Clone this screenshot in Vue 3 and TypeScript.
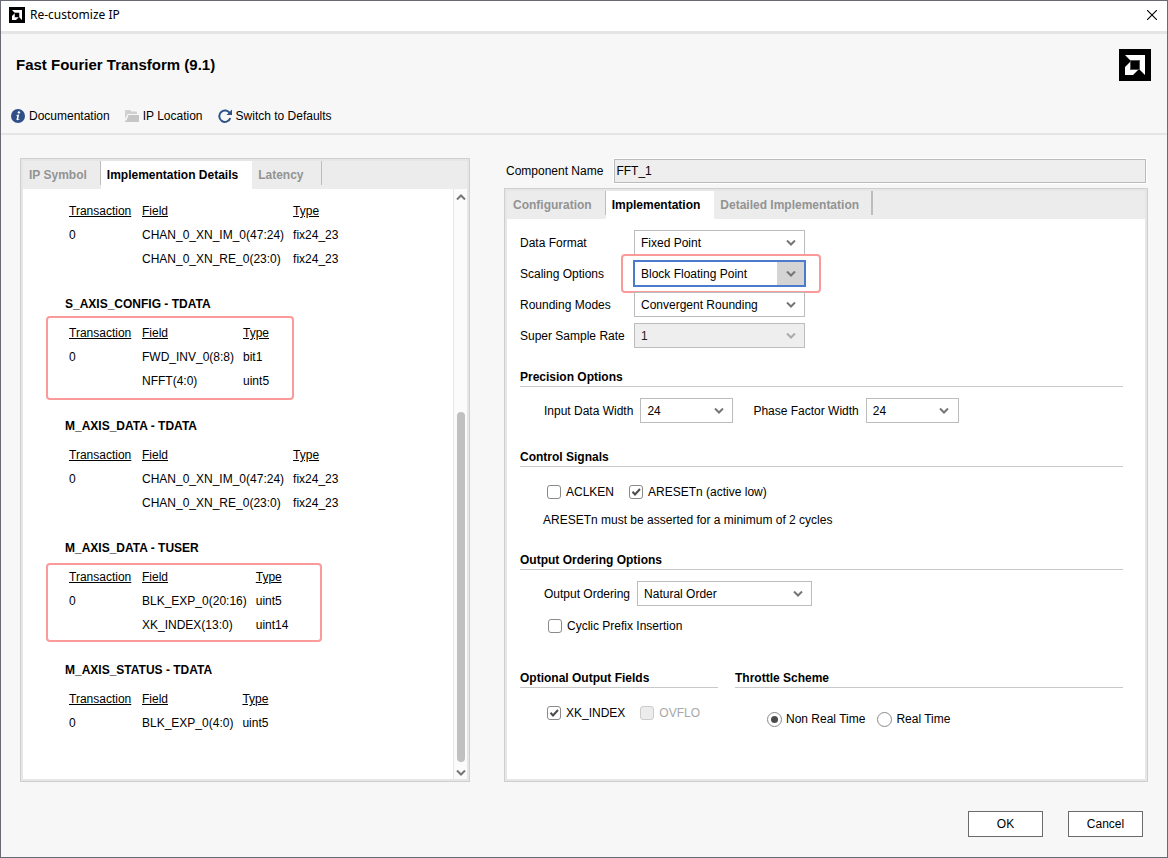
<script setup lang="ts">
import { ref } from 'vue'

interface PortRow {
  transaction: string
  field: string
  type: string
}
interface Port {
  title: string
  mark: string
  rows: PortRow[]
}
interface Option {
  id: string
  label: string
  value: string
  disabled: boolean
  focused: boolean
}

const ports: Port[] = [
  {
    title: '',
    mark: '',
    rows: [
      { transaction: '0', field: 'CHAN_0_XN_IM_0(47:24)', type: 'fix24_23' },
      { transaction: '', field: 'CHAN_0_XN_RE_0(23:0)', type: 'fix24_23' },
    ],
  },
  {
    title: 'S_AXIS_CONFIG - TDATA',
    mark: 'mark-config',
    rows: [
      { transaction: '0', field: 'FWD_INV_0(8:8)', type: 'bit1' },
      { transaction: '', field: 'NFFT(4:0)', type: 'uint5' },
    ],
  },
  {
    title: 'M_AXIS_DATA - TDATA',
    mark: '',
    rows: [
      { transaction: '0', field: 'CHAN_0_XN_IM_0(47:24)', type: 'fix24_23' },
      { transaction: '', field: 'CHAN_0_XN_RE_0(23:0)', type: 'fix24_23' },
    ],
  },
  {
    title: 'M_AXIS_DATA - TUSER',
    mark: 'mark-user',
    rows: [
      { transaction: '0', field: 'BLK_EXP_0(20:16)', type: 'uint5' },
      { transaction: '', field: 'XK_INDEX(13:0)', type: 'uint14' },
    ],
  },
  {
    title: 'M_AXIS_STATUS - TDATA',
    mark: '',
    rows: [{ transaction: '0', field: 'BLK_EXP_0(4:0)', type: 'uint5' }],
  },
]

const options: Option[] = [
  { id: 'data-format', label: 'Data Format', value: 'Fixed Point', disabled: false, focused: false },
  { id: 'scaling', label: 'Scaling Options', value: 'Block Floating Point', disabled: false, focused: true },
  { id: 'rounding', label: 'Rounding Modes', value: 'Convergent Rounding', disabled: false, focused: false },
  { id: 'ssr', label: 'Super Sample Rate', value: '1', disabled: true, focused: false },
]

const componentName = ref('FFT_1')
const aclken = ref(false)
const aresetn = ref(true)
const cyclicPrefix = ref(false)
const xkIndex = ref(true)
const throttle = ref('nrt')
</script>

<template>
  <div class="dialog">
    <header class="titlebar">
      <svg class="logo-small" viewBox="0 0 32 32" aria-hidden="true">
        <rect width="32" height="32" fill="#000" />
        <path d="M6 6H26V26L20.5 20.5V11.5H11.5Z" fill="#fff" />
        <path d="M6 18L11.5 12.5V20.5H19.5L14 26H6Z" fill="#fff" />
      </svg>
      <span class="window-name">Re-customize IP</span>
      <button class="close" type="button" aria-label="Close">
        <svg viewBox="0 0 10 10" width="10" height="10">
          <path d="M0 0L10 10M10 0L0 10" stroke="#000" stroke-width="1.1" fill="none" />
        </svg>
      </button>
    </header>

    <div class="heading">
      <h1>Fast Fourier Transform (9.1)</h1>
      <svg class="logo" viewBox="0 0 32 32" aria-hidden="true">
        <rect width="32" height="32" fill="#000" />
        <path d="M6 6H26V26L20.5 20.5V11.5H11.5Z" fill="#fff" />
        <path d="M6 18L11.5 12.5V20.5H19.5L14 26H6Z" fill="#fff" />
        <rect x="11.5" y="11.5" width="9" height="9" fill="#000" stroke="#555" stroke-width="1" />
      </svg>
    </div>

    <nav class="toolbar">
      <button type="button">
        <svg viewBox="0 0 14 14" width="14" height="14">
          <circle cx="7" cy="7" r="7" fill="#2f4f87" />
          <circle cx="7.9" cy="3.4" r="1.2" fill="#fff" />
          <path d="M5.2 6L8.2 5.6L7.2 10.2Q7.3 10.6 8.6 10V10.6Q5.4 12 5.5 10.3L6.3 6.7L5.2 6.6Z" fill="#fff" />
        </svg>
        Documentation
      </button>
      <button type="button">
        <svg viewBox="0 0 14 14" width="14" height="14">
          <path d="M0 2Q0 1 1 1H5L6.5 2.5H11Q12 2.5 12 3.500V5H3.500Q2.500 5 2 6L0 10Z" fill="#d0d0d0" />
          <path d="M3.500 6H14V12Q14 13 13 13H1Q0 13 0 12V11.500H1.500Z" fill="#c6c6c6" />
        </svg>
        IP Location
      </button>
      <button type="button">
        <svg viewBox="0 0 14 14" width="14" height="14">
          <path d="M12 4.500A5.700 5.700 0 1 0 12.300 9.200" stroke="#2f5288" stroke-width="2" fill="none" />
          <path d="M14 0.500V6H8.500Z" fill="#2f5288" />
        </svg>
        Switch to Defaults
      </button>
    </nav>

    <main class="main">
      <section class="panel">
        <div class="tabs" role="tablist">
          <button class="tab divided" type="button" role="tab">IP Symbol</button>
          <button class="tab active" type="button" role="tab" aria-selected="true">Implementation Details</button>
          <button class="tab divided roomy" type="button" role="tab">Latency</button>
        </div>
        <div class="viewer">
          <div class="ports">
            <div v-for="(port, i) in ports" :key="i" class="port">
              <h2 v-if="port.title">{{ port.title }}</h2>
              <div class="port-table">
                <table>
                  <thead>
                    <tr>
                      <th scope="col">Transaction</th>
                      <th scope="col">Field</th>
                      <th scope="col">Type</th>
                    </tr>
                  </thead>
                  <tbody>
                    <tr v-for="row in port.rows" :key="row.field">
                      <td>{{ row.transaction }}</td>
                      <td>{{ row.field }}</td>
                      <td>{{ row.type }}</td>
                    </tr>
                  </tbody>
                </table>
                <span v-if="port.mark" class="mark" :class="port.mark"></span>
              </div>
            </div>
          </div>
          <div class="scrollbar" aria-hidden="true">
            <svg viewBox="0 0 10 6" width="10" height="6"><path d="M1 5.500L5 1.500L9 5.500" /></svg>
            <div class="track"><div class="thumb"></div></div>
            <svg viewBox="0 0 10 6" width="10" height="6"><path d="M1 0.500L5 4.500L9 0.500" /></svg>
          </div>
        </div>
      </section>

      <div class="settings">
        <div class="name-row">
          <label for="component-name">Component Name</label>
          <input id="component-name" v-model="componentName" type="text" readonly />
        </div>

        <section class="panel">
          <div class="tabs" role="tablist">
            <button class="tab divided" type="button" role="tab">Configuration</button>
            <button class="tab active" type="button" role="tab" aria-selected="true">Implementation</button>
            <button class="tab divided thick" type="button" role="tab">Detailed Implementation</button>
          </div>

          <form class="form" @submit.prevent>
            <div v-for="opt in options" :key="opt.id" class="option">
              <label :for="opt.id">{{ opt.label }}</label>
              <div class="combo wide" :class="{ focused: opt.focused, disabled: opt.disabled }">
                <select :id="opt.id" :disabled="opt.disabled">
                  <option>{{ opt.value }}</option>
                </select>
                <span class="arrow"><svg viewBox="0 0 10 6" width="10" height="6"><path d="M1 0.500L5 4.500L9 0.500" /></svg></span>
                <span v-if="opt.focused" class="mark mark-scaling"></span>
              </div>
            </div>

            <fieldset class="group precision">
              <legend>Precision Options</legend>
              <div class="line">
                <label for="input-width">Input Data Width</label>
                <div class="combo narrow">
                  <select id="input-width"><option>24</option></select>
                  <span class="arrow"><svg viewBox="0 0 10 6" width="10" height="6"><path d="M1 0.500L5 4.500L9 0.500" /></svg></span>
                </div>
                <label class="second" for="phase-width">Phase Factor Width</label>
                <div class="combo narrow">
                  <select id="phase-width"><option>24</option></select>
                  <span class="arrow"><svg viewBox="0 0 10 6" width="10" height="6"><path d="M1 0.500L5 4.500L9 0.500" /></svg></span>
                </div>
              </div>
            </fieldset>

            <fieldset class="group control">
              <legend>Control Signals</legend>
              <div class="checks">
                <label class="check">
                  <input v-model="aclken" type="checkbox" />
                  <svg viewBox="0 0 14 14"><path d="M3.500 6.800L6 9.500L11 4" /></svg>
                  ACLKEN
                </label>
                <label class="check">
                  <input v-model="aresetn" type="checkbox" />
                  <svg viewBox="0 0 14 14"><path d="M3.500 6.800L6 9.500L11 4" /></svg>
                  ARESETn (active low)
                </label>
              </div>
              <p class="note">ARESETn must be asserted for a minimum of 2 cycles</p>
            </fieldset>

            <fieldset class="group ordering">
              <legend>Output Ordering Options</legend>
              <div class="line">
                <label for="output-order">Output Ordering</label>
                <div class="combo medium">
                  <select id="output-order"><option>Natural Order</option></select>
                  <span class="arrow"><svg viewBox="0 0 10 6" width="10" height="6"><path d="M1 0.500L5 4.500L9 0.500" /></svg></span>
                </div>
              </div>
              <div class="checks">
                <label class="check">
                  <input v-model="cyclicPrefix" type="checkbox" />
                  <svg viewBox="0 0 14 14"><path d="M3.500 6.800L6 9.500L11 4" /></svg>
                  Cyclic Prefix Insertion
                </label>
              </div>
            </fieldset>

            <div class="pair">
              <fieldset class="group optional">
                <legend>Optional Output Fields</legend>
                <div class="checks">
                  <label class="check">
                    <input v-model="xkIndex" type="checkbox" />
                    <svg viewBox="0 0 14 14"><path d="M3.500 6.800L6 9.500L11 4" /></svg>
                    XK_INDEX
                  </label>
                  <label class="check off">
                    <input type="checkbox" disabled />
                    OVFLO
                  </label>
                </div>
              </fieldset>
              <fieldset class="group throttle">
                <legend>Throttle Scheme</legend>
                <div class="radios">
                  <label class="radio"><input v-model="throttle" type="radio" name="throttle" value="nrt" />Non Real Time</label>
                  <label class="radio"><input v-model="throttle" type="radio" name="throttle" value="rt" />Real Time</label>
                </div>
              </fieldset>
            </div>
          </form>
        </section>
      </div>
    </main>

    <footer class="footer">
      <button type="button">OK</button>
      <button type="button">Cancel</button>
    </footer>
  </div>
</template>

<style>
body {
  margin: 0;
}
</style>

<style scoped>
* {
  box-sizing: border-box;
}
.dialog {
  display: flex;
  flex-direction: column;
  min-height: 100vh;
  border: 1px solid #686b73;
  background: #f7f7f7;
  color: #000;
  font: 12px/18px "Liberation Sans", Arial, sans-serif;
}
button,
input,
select {
  margin: 0;
  font: inherit;
  color: inherit;
}
svg {
  display: block;
  flex: none;
}

.titlebar {
  display: flex;
  align-items: center;
  height: 33px;
  padding: 0 10px 3px 8px;
  border-bottom: 3px solid #e5e5e5;
  background: #fff;
}
.logo-small {
  width: 16px;
  height: 16px;
}
.window-name {
  margin-left: 5px;
  font-family: "Noto Sans", "Open Sans", sans-serif;
}
.close {
  margin-left: auto;
  padding: 0;
  border: 0;
  background: none;
}
.heading {
  display: flex;
  align-items: center;
  justify-content: space-between;
  padding: 15px 16px 0 15px;
}
h1 {
  margin: 0;
  font-size: 15px;
  line-height: 20px;
}
.logo {
  width: 32px;
  height: 32px;
}
.toolbar {
  display: flex;
  gap: 15px;
  padding: 26px 10px 8px;
  border-bottom: 2px solid #e5e5e5;
}
.toolbar button {
  display: flex;
  align-items: center;
  gap: 4px;
  padding: 0;
  border: 0;
  background: none;
}

.main {
  flex: 1;
  display: grid;
  grid-template-columns: 450fr 644fr;
  gap: 34px;
  padding: 23px 19px 0;
}
.settings {
  display: flex;
  flex-direction: column;
  gap: 4px;
}
.panel {
  display: flex;
  flex-direction: column;
  flex: 1;
  border: 1px solid #cfcfcf;
  background: #fff;
  box-shadow: inset 0 0 0 2px #e6e6e6;
  padding: 2px;
}
.tabs {
  display: flex;
  height: 28px;
  background: #ececec;
}
.tab {
  position: relative;
  padding: 0 14px 0 6px;
  border: 0;
  background: none;
  color: #939393;
  font-weight: bold;
}
.tab.roomy {
  padding-right: 18px;
}
.tab.divided::after {
  content: "";
  position: absolute;
  top: 0;
  right: 0;
  width: 1px;
  height: 24px;
  background: #bdbdbd;
}
.tab.thick::after {
  width: 2px;
}
.tab.active {
  background: #fff;
  color: #000;
}

.viewer {
  flex: 1;
  display: flex;
}
.ports {
  flex: 1;
  padding: 10px 0 0 42px;
}
h2 {
  margin: 24px 0 8px;
  font-size: 12px;
  line-height: 18px;
}
.port-table {
  position: relative;
  width: max-content;
  margin-left: 4px;
}
table {
  border-collapse: collapse;
}
th,
td {
  height: 24px;
  padding: 0 9px 0 0;
  text-align: left;
  font-weight: normal;
}
th {
  text-decoration: underline;
}
th:first-child {
  width: 73px;
}
.mark {
  position: absolute;
  border: 2px solid #fb9a9a;
  border-radius: 4px;
  pointer-events: none;
}
.mark-config {
  inset: -5px -16px -7px -23px;
}
.mark-user {
  inset: -2px -25px -5px -23px;
}
.mark-scaling {
  inset: -7px -16px -7px -13px;
}
.scrollbar {
  display: flex;
  flex-direction: column;
  align-items: center;
  gap: 6px;
  width: 14px;
  padding: 5px 0 3px;
  border-left: 1px solid #e6e6e6;
  background: #fbfbfb;
}
.scrollbar path,
.arrow path {
  fill: none;
  stroke: #757575;
  stroke-width: 2;
}
.track {
  flex: 1;
  display: flex;
  align-items: flex-end;
  padding-bottom: 2px;
}
.thumb {
  width: 8px;
  height: 63%;
  border-radius: 4px;
  background: #c0c0c0;
}

.name-row {
  display: flex;
  align-items: center;
  gap: 10px;
  padding: 0 1px 0 2px;
}
.name-row input {
  flex: 1;
  min-width: 0;
  height: 26px;
  padding: 0 2px;
  border: 1px solid #fff;
  outline: 1px solid #bbb;
  outline-offset: -2px;
  background: #eee;
}

.form {
  padding: 8px 22px 0 13px;
}
.option {
  display: grid;
  grid-template-columns: 114px auto;
  justify-content: start;
  align-items: center;
  height: 31px;
}
.combo {
  position: relative;
  height: 25px;
}
.combo select {
  width: 100%;
  height: 100%;
  padding: 0 28px 0 6px;
  border: 1px solid #bcbcbc;
  border-radius: 0;
  background: #fff;
  appearance: none;
  outline: none;
}
.combo.wide {
  width: 171px;
}
.combo.narrow {
  width: 93px;
}
.combo.medium {
  width: 175px;
}
.arrow {
  position: absolute;
  inset: 1px 1px 1px auto;
  display: flex;
  align-items: center;
  justify-content: center;
  width: 27px;
  pointer-events: none;
}
.combo.focused select {
  outline: 2px solid #4b7bcc;
  outline-offset: -1px;
}
.focused .arrow {
  background: #d4d4d4;
}
.combo.disabled select {
  background: #eee;
  color: #222;
  opacity: 1;
}
.disabled .arrow path {
  stroke: #aaa;
}

.group {
  min-width: 0;
  margin: 0;
  padding: 0;
  border: 0;
}
legend {
  width: 100%;
  padding: 0;
  border-bottom: 1px solid #c8c8c8;
  font-weight: bold;
  line-height: 18px;
}
.precision {
  margin-top: 17px;
}
.line {
  display: flex;
  align-items: center;
  gap: 7px;
  padding: 11px 0 0 24px;
}
.second {
  margin-left: 13px;
}
.control {
  margin-top: 25px;
}
.checks {
  display: flex;
  gap: 15px;
  padding-left: 27px;
}
.control .checks {
  padding-top: 16px;
}
.check,
.radio {
  position: relative;
  display: flex;
  align-items: center;
  gap: 5px;
}
.check input {
  width: 14px;
  height: 14px;
  border: 1px solid #8a8a8a;
  border-radius: 3px;
  background: #fff;
  appearance: none;
}
.check svg {
  position: absolute;
  left: 0;
  width: 14px;
  height: 14px;
  visibility: hidden;
  pointer-events: none;
}
.check svg path {
  fill: none;
  stroke: #4c4c4c;
  stroke-width: 2;
}
.check input:checked + svg {
  visibility: visible;
}
.check.off {
  color: #a8a8a8;
}
.check.off input {
  border-color: #ccc;
  background: #ececec;
}
.note {
  margin: 10px 0 0 23px;
}
.ordering {
  margin-top: 22px;
}
.ordering .checks {
  padding: 11px 0 0 28px;
}
.pair {
  display: grid;
  grid-template-columns: 198fr 388fr;
  gap: 17px;
  margin-top: 34px;
}
.optional .checks {
  padding-top: 16px;
}
.radios {
  display: flex;
  gap: 12px;
  padding: 22px 0 0 32px;
}
.radio {
  gap: 4px;
}
.radio input {
  display: grid;
  place-items: center;
  width: 15px;
  height: 15px;
  border: 1px solid #8a8a8a;
  border-radius: 50%;
  background: #fff;
  appearance: none;
}
.radio input:checked::before {
  content: "";
  width: 7px;
  height: 7px;
  border-radius: 50%;
  background: #4c4c4c;
}

.footer {
  display: flex;
  justify-content: flex-end;
  gap: 25px;
  padding: 29px 24px 20px;
}
.footer button {
  width: 75px;
  height: 26px;
  padding: 0;
  border: 1px solid #6b6b6b;
  background: #fff;
}
</style>
